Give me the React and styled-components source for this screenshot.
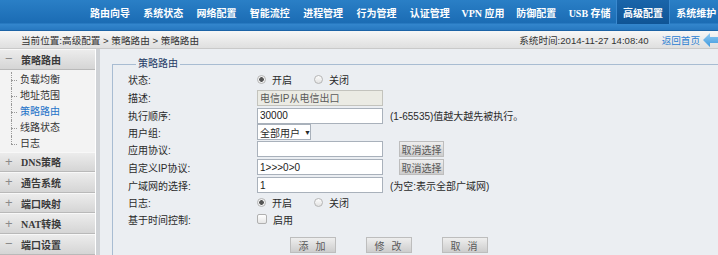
import React from "react";
import styled, { createGlobalStyle } from "styled-components";

const GlobalStyle = createGlobalStyle`
  html, body { margin: 0; padding: 0; }
  body {
    font-family: "Liberation Sans", "Noto Sans CJK SC", sans-serif;
    font-size: 10px;
    color: #2a2a2a;
    background: #ebeef2;
    overflow: hidden;
  }
  * { box-sizing: border-box; }
`;

const Page = styled.div`
  width: 718px;
  height: 255px;
  overflow: hidden;
  display: flex;
  flex-direction: column;
`;

const TopBar = styled.div`
  height: 31px;
  flex: 0 0 31px;
  display: flex;
  align-items: flex-start;
  padding-left: 83.3px;
  background: linear-gradient(
    to bottom,
    #2a7fc6 0px,
    #1b6cb4 23px,
    #3386cd 24px,
    #2778c0 30px,
    #124f8c 31px
  );
  overflow: hidden;
`;

const NavItem = styled.div`
  flex: 0 0 53.3px;
  height: 24px;
  display: flex;
  align-items: center;
  justify-content: center;
  color: #ffffff;
  font-family: "Liberation Serif", "Noto Sans CJK SC", serif;
  font-weight: bold;
  font-size: 10px;
  white-space: nowrap;
  background: ${(p) => (p.$active ? "linear-gradient(#1a65aa, #0f5495)" : "transparent")};
  box-shadow: ${(p) => (p.$active ? "inset 1px 0 0 #3a89cf, inset -1px 0 0 #3a89cf" : "none")};
`;

const Crumbs = styled.div`
  height: 18px;
  flex: 0 0 18px;
  display: flex;
  align-items: center;
  justify-content: space-between;
  padding-left: 21px;
  background: linear-gradient(#f7f7f7, #dfdfdf);
  border-bottom: 1px solid #c9c9c9;
  color: #333;
  font-size: 9.6px;
  white-space: pre;
`;

const CrumbRight = styled.div`
  display: flex;
  align-items: center;
`;

const Clock = styled.span`
  margin-right: 13px;
`;

const HomeLink = styled.span`
  color: #2b80d2;
  margin-right: 3px;
`;

const Body = styled.div`
  flex: 1;
  display: flex;
  min-height: 0;
`;

const Sidebar = styled.div`
  width: 96px;
  flex: 0 0 96px;
  background: #f3f3f3;
  border-right: 1px solid #ffffff;
`;

const Splitter = styled.div`
  width: 4px;
  flex: 0 0 4px;
  background: #cfd2d6;
`;

const GroupHeader = styled.div`
  height: 20.6px;
  display: flex;
  align-items: center;
  padding-left: 5px;
  background: linear-gradient(#ececec, #d5d5d5);
  border-top: 1px solid #f8f8f8;
  border-bottom: 1px solid #b9b9b9;
  font-family: "Liberation Serif", "Noto Sans CJK SC", serif;
  font-weight: bold;
  font-size: 10px;
  color: #3a3a3a;
`;

const Sign = styled.span`
  width: 16px;
  color: #8a8a8a;
  font-family: "Liberation Sans", sans-serif;
  font-weight: normal;
  font-size: 13px;
  line-height: 10px;
`;

const ItemList = styled.div`
  height: 82px;
  padding-top: 2px;
`;

const Item = styled.div`
  position: relative;
  height: 16px;
  line-height: 16px;
  padding-left: 20px;
  color: ${(p) => (p.$active ? "#1f74c9" : "#333")};
  &::before {
    content: "";
    position: absolute;
    left: 11px;
    top: 0;
    height: ${(p) => (p.$last ? "8px" : "16px")};
    border-left: 1px dotted #999;
  }
  &::after {
    content: "";
    position: absolute;
    left: 11px;
    top: 8px;
    width: 6px;
    border-top: 1px dotted #999;
  }
`;

const Content = styled.div`
  flex: 1;
  background: #ebeef2;
  padding: 9px 0 0 12px;
  overflow: hidden;
`;

const Fieldset = styled.fieldset`
  margin: 0 -6px 0 0;
  padding: 0 0 0 15px;
  border: 1px solid #a8bcd2;
  height: 260px;
`;

const Legend = styled.legend`
  margin-left: 8px;
  padding: 0 2px;
  line-height: 12px;
  font-size: 10px;
  color: #1f3b66;
`;

const Row = styled.div`
  display: grid;
  grid-template-columns: 129px auto;
  align-items: center;
  height: ${(p) => p.$h}px;
`;

const Label = styled.div`
  color: #2a2a2a;
`;

const Value = styled.div`
  display: flex;
  align-items: center;
  white-space: nowrap;
`;

const RadioDot = styled.span`
  width: 9px;
  height: 9px;
  border-radius: 50%;
  border: 1px solid #b5b5b5;
  background: ${(p) =>
    p.$checked
      ? "radial-gradient(circle, #555 0 2px, #f2f2f2 2.6px)"
      : "linear-gradient(#fdfdfd, #e2e2e2)"};
  margin-right: 6px;
`;

const RadioText = styled.span`
  margin-right: ${(p) => p.$mr || 0}px;
`;

const CheckBox = styled.span`
  width: 10px;
  height: 10px;
  border: 1px solid #b0b0b0;
  border-radius: 2px;
  background: linear-gradient(#ffffff, #e6e6e6);
  margin-right: 6px;
`;

const TextInput = styled.input`
  width: 126px;
  height: 16px;
  margin: 0;
  padding: 0 2px;
  border: 1px solid ${(p) => (p.disabled ? "#c3c3bd" : "#a9b1bb")};
  background: ${(p) => (p.disabled ? "#ebebe4" : "#ffffff")};
  color: ${(p) => (p.disabled ? "#5a5a5a" : "#1a1a1a")};
  font-family: "Liberation Sans", "Noto Sans CJK SC", sans-serif;
  font-size: 10px;
  outline: none;
`;

const Hint = styled.span`
  margin-left: 7px;
  color: #2a2a2a;
`;

const SelectBox = styled.div`
  width: 54px;
  height: 16px;
  border: 1px solid #a9b1bb;
  background: #fff;
  display: flex;
  align-items: center;
  padding-left: 2px;
  gap: 4px;
  font-size: 10px;
  white-space: nowrap;
`;

const Caret = styled.span`
  font-size: 7px;
`;

const GreyButton = styled.button`
  width: ${(p) => p.$w}px;
  height: 16px;
  margin: 0 0 0 ${(p) => p.$ml || 0}px;
  padding: 0;
  border: 1px solid #bdbdbd;
  background: linear-gradient(#eeeeee, #cdcdcd);
  color: #5a5a5a;
  font-family: "Liberation Sans", "Noto Sans CJK SC", sans-serif;
  font-size: 10px;
  white-space: nowrap;
  letter-spacing: ${(p) => (p.$spaced ? "2px" : "0")};
`;

const ButtonRow = styled.div`
  display: flex;
  margin-top: 10px;
  padding-left: 162px;
  gap: 30px;
`;

function Radio({ on }) {
  return (
    <Value>
      <RadioDot $checked={on} />
      <RadioText $mr={22}>开启</RadioText>
      <RadioDot $checked={!on} />
      <RadioText>关闭</RadioText>
    </Value>
  );
}

function BackArrow() {
  return (
    <svg width="15" height="14" viewBox="0 0 15 14">
      <defs>
        <linearGradient id="ag" x1="0" y1="0" x2="0" y2="1">
          <stop offset="0" stopColor="#8fcaf3" />
          <stop offset="1" stopColor="#3d98dd" />
        </linearGradient>
      </defs>
      <path d="M0 7 L7 0 L7 4 L15 4 L15 10 L7 10 L7 14 Z" fill="url(#ag)" />
    </svg>
  );
}

const navItems = [
  "路由向导", "系统状态", "网络配置", "智能流控", "进程管理", "行为管理",
  "认证管理", "VPN 应用", "防御配置", "USB 存储", "高级配置", "系统维护",
];

const subItems = ["负载均衡", "地址范围", "策略路由", "线路状态", "日志"];
const groups = [
  { sign: "+", name: "DNS策略" },
  { sign: "+", name: "通告系统" },
  { sign: "+", name: "端口映射" },
  { sign: "+", name: "NAT转换" },
  { sign: "−", name: "端口设置" },
];

export default function App() {
  return (
    <>
      <GlobalStyle />
      <Page>
        <TopBar>
          {navItems.map((n) => (
            <NavItem key={n} $active={n === "高级配置"}>{n}</NavItem>
          ))}
        </TopBar>
        <Crumbs>
          <span>当前位置:高级配置 &gt; 策略路由 &gt; 策略路由</span>
          <CrumbRight>
            <Clock>系统时间:2014-11-27 14:08:40</Clock>
            <HomeLink>返回首页</HomeLink>
            <BackArrow />
          </CrumbRight>
        </Crumbs>
        <Body>
          <Sidebar>
            <GroupHeader><Sign>−</Sign>策略路由</GroupHeader>
            <ItemList>
              {subItems.map((s, i) => (
                <Item key={s} $active={s === "策略路由"} $last={i === subItems.length - 1}>{s}</Item>
              ))}
            </ItemList>
            {groups.map((g) => (
              <GroupHeader key={g.name}><Sign>{g.sign}</Sign>{g.name}</GroupHeader>
            ))}
          </Sidebar>
          <Splitter />
          <Content>
            <Fieldset>
              <Legend>策略路由</Legend>
              <Row $h={18}>
                <Label>状态:</Label>
                <Radio on />
              </Row>
              <Row $h={19}>
                <Label>描述:</Label>
                <Value><TextInput disabled value="电信IP从电信出口" readOnly /></Value>
              </Row>
              <Row $h={17}>
                <Label>执行顺序:</Label>
                <Value>
                  <TextInput value="30000" readOnly />
                  <Hint>(1-65535)值越大越先被执行。</Hint>
                </Value>
              </Row>
              <Row $h={16}>
                <Label>用户组:</Label>
                <Value><SelectBox>全部用户<Caret>▼</Caret></SelectBox></Value>
              </Row>
              <Row $h={18}>
                <Label>应用协议:</Label>
                <Value>
                  <TextInput value="" readOnly />
                  <GreyButton $w={45} $ml={16}>取消选择</GreyButton>
                </Value>
              </Row>
              <Row $h={18}>
                <Label>自定义IP协议:</Label>
                <Value>
                  <TextInput value="1>>>0>0" readOnly />
                  <GreyButton $w={45} $ml={16}>取消选择</GreyButton>
                </Value>
              </Row>
              <Row $h={18}>
                <Label>广域网的选择:</Label>
                <Value>
                  <TextInput value="1" readOnly />
                  <Hint>(为空:表示全部广域网)</Hint>
                </Value>
              </Row>
              <Row $h={17}>
                <Label>日志:</Label>
                <Radio on />
              </Row>
              <Row $h={16}>
                <Label>基于时间控制:</Label>
                <Value><CheckBox />启用</Value>
              </Row>
              <ButtonRow>
                <GreyButton $w={46} $spaced>添 加</GreyButton>
                <GreyButton $w={46} $spaced>修 改</GreyButton>
                <GreyButton $w={46} $spaced>取 消</GreyButton>
              </ButtonRow>
            </Fieldset>
          </Content>
        </Body>
      </Page>
    </>
  );
}
